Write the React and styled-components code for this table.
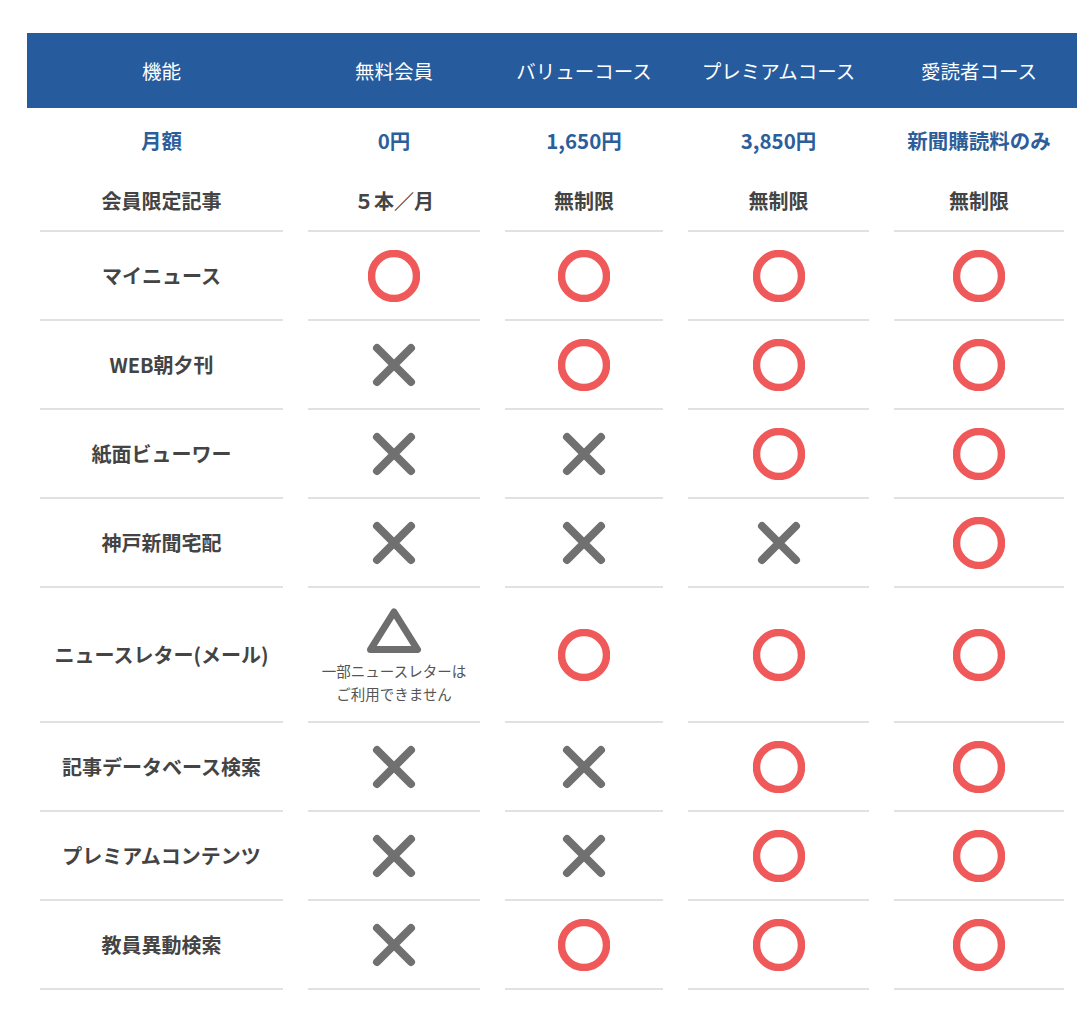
import React from "react";
import styled, { createGlobalStyle } from "styled-components";

const GlobalStyle = createGlobalStyle`
  body {
    margin: 0;
    background: #fff;
    font-family: "Noto Sans CJK JP", "Noto Sans", sans-serif;
  }
`;

const COLS = "243px 172px 158px 181px 170px";

const plans = ["無料会員", "バリューコース", "プレミアムコース", "愛読者コース"];
const prices = ["0円", "1,650円", "3,850円", "新聞購読料のみ"];
const limits = ["５本／月", "無制限", "無制限", "無制限"];

// o = 利用可, x = 不可, t = 一部
const features = [
  { name: "マイニュース", marks: ["o", "o", "o", "o"] },
  { name: "WEB朝夕刊", marks: ["x", "o", "o", "o"] },
  { name: "紙面ビューワー", marks: ["x", "x", "o", "o"] },
  { name: "神戸新聞宅配", marks: ["x", "x", "x", "o"] },
  { name: "ニュースレター(メール)", marks: ["t", "o", "o", "o"], tall: true },
  { name: "記事データベース検索", marks: ["x", "x", "o", "o"] },
  { name: "プレミアムコンテンツ", marks: ["x", "x", "o", "o"] },
  { name: "教員異動検索", marks: ["x", "o", "o", "o"] },
];

function Circle() {
  return (
    <svg width="52" height="52" viewBox="0 0 52 52">
      <circle cx="26" cy="26" r="22.5" fill="none" stroke="#ef5959" strokeWidth="7.5" />
    </svg>
  );
}

function Cross() {
  return (
    <svg width="44" height="44" viewBox="0 0 44 44">
      <path d="M5 5 L39 39 M39 5 L5 39" stroke="#707070" strokeWidth="8" strokeLinecap="round" />
    </svg>
  );
}

function Triangle() {
  return (
    <svg width="56" height="48" viewBox="0 0 56 48">
      <path d="M28 5 L51.5 42.5 L4.5 42.5 Z" fill="none" stroke="#6e6e6e" strokeWidth="7" strokeLinejoin="round" />
    </svg>
  );
}

function Mark({ type }) {
  if (type === "o") return <Circle />;
  if (type === "x") return <Cross />;
  return (
    <Partial>
      <Triangle />
      <Note>一部ニュースレターは<br />ご利用できません</Note>
    </Partial>
  );
}

export default function App() {
  return (
    <Page>
      <GlobalStyle />
      <Table>
        <HeadRow>
          <HeadCell>機能</HeadCell>
          {plans.map((p) => <HeadCell key={p}>{p}</HeadCell>)}
        </HeadRow>
        <Row>
          <PriceCell>月額</PriceCell>
          {prices.map((p) => <PriceCell key={p}>{p}</PriceCell>)}
        </Row>
        <Row>
          <Cell $h={61} $line>会員限定記事</Cell>
          {limits.map((l, i) => <Cell key={i} $h={61} $line>{l}</Cell>)}
        </Row>
        {features.map((f) => (
          <Row key={f.name}>
            <Cell $h={f.tall ? 135 : 89} $line>{f.name}</Cell>
            {f.marks.map((m, i) => (
              <Cell key={i} $h={f.tall ? 135 : 89} $line>
                <Mark type={m} />
              </Cell>
            ))}
          </Row>
        ))}
      </Table>
    </Page>
  );
}

const Page = styled.div`
  padding: 33px 13px 40px 27px;
  width: 1050px;
`;

const Table = styled.div`
  display: flex;
  flex-direction: column;
`;

const HeadRow = styled.div`
  display: grid;
  grid-template-columns: ${COLS};
  column-gap: 25px;
  background: #265b9e;
  padding: 0 12px 0 13px;
  height: 75px;
  align-items: center;
`;

const HeadCell = styled.div`
  color: #fff;
  font-size: 19.5px;
  font-weight: 400;
  text-align: center;
  white-space: nowrap;
`;

const Row = styled.div`
  display: grid;
  grid-template-columns: ${COLS};
  column-gap: 25px;
  padding: 0 12px 0 13px;
`;

const PriceCell = styled.div`
  height: 63px;
  display: flex;
  align-items: center;
  justify-content: center;
  color: #2c5e9b;
  font-size: 20.5px;
  font-weight: 700;
  white-space: nowrap;
`;

const Cell = styled.div`
  height: ${(p) => p.$h}px;
  box-sizing: border-box;
  display: flex;
  align-items: center;
  justify-content: center;
  color: #444;
  font-size: 20px;
  font-weight: 700;
  white-space: nowrap;
  border-bottom: ${(p) => (p.$line ? "2px solid #e1e1e1" : "none")};
`;

const Partial = styled.div`
  display: flex;
  flex-direction: column;
  align-items: center;
  gap: 4px;
  padding-top: 2px;
`;

const Note = styled.div`
  font-size: 14.5px;
  font-weight: 400;
  line-height: 23px;
  color: #555;
  text-align: center;
`;
